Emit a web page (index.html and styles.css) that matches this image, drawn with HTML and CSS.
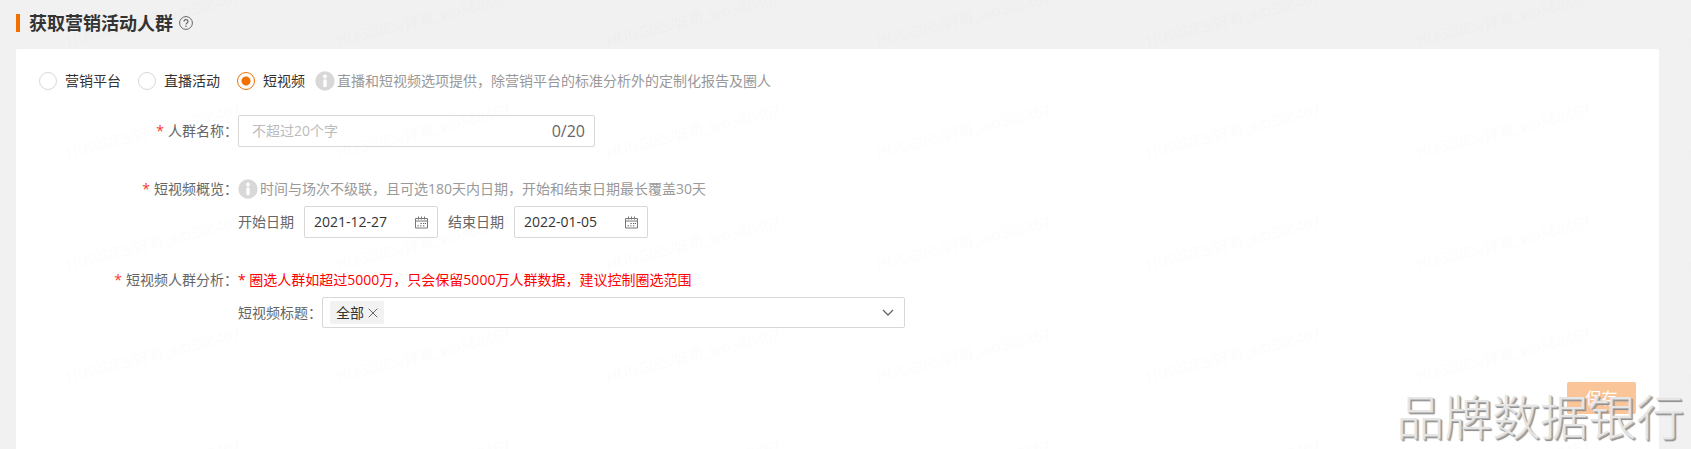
FILE: index.html
```html
<!DOCTYPE html>
<html lang="zh-CN">
<head>
    <meta charset="UTF-8">
    <meta name="viewport" content="width=device-width, initial-scale=1.0">
    <title>获取营销活动人群</title>
    <link rel="stylesheet" href="styles.css">
</head>
<body>

    <!-- Shared icons -->
    <svg class="icon-defs" aria-hidden="true">
        <symbol id="icon-info" viewBox="0 0 20 20">
            <circle cx="10" cy="10" r="9.7" fill="#d8d8d8"/>
            <circle cx="10" cy="5.5" r="1.9" fill="#fff"/>
            <rect x="8.3" y="8.2" width="3.4" height="8" rx="1.5" fill="#fff"/>
        </symbol>
        <symbol id="icon-calendar" viewBox="0 0 13 13">
            <path d="M.5 2.5h12v9.5H.5zM.5 5h12M3.5 .5v3M6.5 .5v3M9.5 .5v3" fill="none" stroke="#777"/>
            <path d="M5.5 7.5h1.3M8 7.5h1.3M10 7.5h1M2.5 9.8h1.3M5.2 9.8h1.3M8 9.8h1.3" stroke="#666"/>
        </symbol>
    </svg>

    <header class="page-header">
        <h1 class="page-title">获取营销活动人群</h1>
        <svg class="icon-help" viewBox="0 0 14 14">
            <circle cx="7" cy="7" r="6.4" fill="none" stroke="#666"/>
            <path d="M5 5.6c0-2.6 4-2.6 4 0 0 1.5-2 1.4-2 3" fill="none" stroke="#666" stroke-width="1.2"/>
            <circle cx="7" cy="10.3" r=".8" fill="#666"/>
        </svg>
    </header>

    <main class="panel">
        <form class="form">
            <div class="radio-row">
                <label class="radio"><input type="radio" name="source">营销平台</label>
                <label class="radio"><input type="radio" name="source">直播活动</label>
                <label class="radio"><input type="radio" name="source" checked>短视频</label>
                <p class="hint"><svg class="icon-info"><use href="#icon-info"/></svg>直播和短视频选项提供，除营销平台的标准分析外的定制化报告及圈人</p>
            </div>

            <div class="form-item">
                <label class="form-label" for="crowdName">人群名称：</label>
                <div class="input-box name-box">
                    <input type="text" id="crowdName" maxlength="20" placeholder="不超过20个字">
                    <span class="count">0/20</span>
                </div>
            </div>

            <div class="form-item">
                <span class="form-label label-top">短视频概览：</span>
                <div class="form-content">
                    <p class="hint"><svg class="icon-info"><use href="#icon-info"/></svg>时间与场次不级联，且可选180天内日期，开始和结束日期最长覆盖30天</p>
                    <div class="date-row">
                        <label for="startDate">开始日期</label>
                        <div class="input-box date-box">
                            <input type="text" id="startDate" value="2021-12-27">
                            <button type="button" class="icon-btn" aria-label="选择开始日期"><svg class="icon-calendar"><use href="#icon-calendar"/></svg></button>
                        </div>
                        <label for="endDate">结束日期</label>
                        <div class="input-box date-box">
                            <input type="text" id="endDate" value="2022-01-05">
                            <button type="button" class="icon-btn" aria-label="选择结束日期"><svg class="icon-calendar"><use href="#icon-calendar"/></svg></button>
                        </div>
                    </div>
                </div>
            </div>

            <div class="form-item">
                <span class="form-label label-top">短视频人群分析：</span>
                <div class="form-content">
                    <p class="warning">* 圈选人群如超过5000万，只会保留5000万人群数据，建议控制圈选范围</p>
                    <div class="title-row">
                        <label for="videoTitle">短视频标题：</label>
                        <div class="select-box">
                            <select id="videoTitle"><option value=""></option></select>
                            <span class="tag">全部
                                <button type="button" class="icon-btn" aria-label="移除">
                                    <svg class="icon-close" viewBox="0 0 10 10"><path d="M.7 .7l8.6 8.6M9.3 .7L.7 9.3" stroke="#666"/></svg>
                                </button>
                            </span>
                            <svg class="icon-arrow" viewBox="0 0 12 7"><path d="M1 1l5 5 5-5" fill="none" stroke="#666" stroke-width="1.3"/></svg>
                        </div>
                    </div>
                </div>
            </div>

            <div class="form-footer">
                <button type="submit" class="save-btn" disabled>保存</button>
            </div>
        </form>
    </main>

    <!-- User watermark -->
    <svg class="watermark" aria-hidden="true">
        <defs>
            <pattern id="mark" y="-20" width="270" height="112" patternUnits="userSpaceOnUse">
                <text class="watermark-text" transform="translate(68 66) rotate(-14)">HUGGIES/好奇_wb588467</text>
            </pattern>
        </defs>
        <rect width="100%" height="100%" fill="url(#mark)"/>
    </svg>
    <div class="brand">品牌数据银行</div>

</body>
</html>
```
FILE: styles.css
```css
* {
    margin: 0;
    padding: 0;
    box-sizing: border-box;
}

body {
    position: relative;
    display: flex;
    flex-direction: column;
    min-height: 100vh;
    overflow-x: hidden;
    background: #f1f1f1;
    color: #666;
    font: 14px/20px "Open Sans", "Noto Sans CJK SC", sans-serif;
}

input,
select,
button {
    font: inherit;
    border: none;
    outline: none;
    background: none;
}

svg {
    display: block;
    flex: none;
}

.icon-defs {
    position: absolute;
    width: 0;
    height: 0;
}

/* Header */
.page-header {
    display: flex;
    align-items: center;
    gap: 6px;
    height: 45px;
    padding-left: 16px;
}

.page-title {
    border-left: 4px solid #f27000;
    padding-left: 9px;
    color: #333;
    font-size: 18px;
    line-height: 18px;
}

.icon-help {
    width: 14px;
    height: 14px;
}

/* Panel */
.panel {
    flex: 1;
    margin: 4px 32px 0 16px;
    padding: 22px 23px 24px;
    border-radius: 2px 2px 0 0;
    background: #fff;
}

.radio-row {
    display: flex;
    align-items: center;
    margin-bottom: 24px;
}

.radio {
    display: flex;
    align-items: center;
    gap: 8px;
    margin-right: 17px;
    color: #333;
}

.radio:nth-of-type(3) {
    margin-right: 10px;
}

.radio input {
    appearance: none;
    width: 18px;
    height: 18px;
    border: 1px solid #d8d8d8;
    border-radius: 50%;
    background: #fff;
}

.radio input:checked {
    border-color: #f27000;
    background: radial-gradient(circle, #f27000 4px, #fff 5px);
}

.hint {
    display: flex;
    align-items: center;
    gap: 2px;
    color: #999;
}

.icon-info {
    width: 20px;
    height: 20px;
}

/* Form rows */
.form-item {
    display: flex;
    margin-bottom: 32px;
}

.form-label {
    flex: none;
    width: 199px;
    text-align: right;
    line-height: 32px;
}

.label-top {
    line-height: 20px;
}

.form-label::before {
    content: "*";
    margin-right: 4px;
    color: #f33;
}

.input-box {
    display: flex;
    align-items: center;
    height: 32px;
    padding: 0 9px;
    border: 1px solid #d8d8d8;
    border-radius: 2px;
    background: #fff;
}

.input-box input {
    flex: 1;
    min-width: 0;
    color: #333;
}

.name-box {
    width: 357px;
    padding-left: 13px;
}

.name-box input::placeholder {
    color: #bbb;
}

.count {
    font-size: 16px;
}

.date-row {
    display: flex;
    align-items: center;
    gap: 10px;
    margin-top: 7px;
}

.date-box {
    width: 134px;
}

.icon-btn {
    display: flex;
    cursor: pointer;
}

.icon-calendar {
    width: 13px;
    height: 13px;
}

.warning {
    color: #f00;
}

.title-row {
    display: flex;
    align-items: center;
    margin-top: 7px;
}

.select-box {
    position: relative;
    width: 583px;
}

.select-box select {
    display: block;
    appearance: none;
    width: 100%;
    height: 31px;
    border: 1px solid #d8d8d8;
    border-radius: 2px;
    background: #fff;
}

.tag {
    position: absolute;
    top: 4px;
    left: 8px;
    display: flex;
    align-items: center;
    gap: 4px;
    height: 23px;
    padding: 0 6px;
    border-radius: 2px;
    background: #f2f2f2;
    color: #333;
}

.icon-close {
    width: 10px;
    height: 10px;
}

.icon-arrow {
    position: absolute;
    top: 12px;
    right: 11px;
    width: 12px;
    height: 7px;
    pointer-events: none;
}

.form-footer {
    display: flex;
    justify-content: flex-end;
    margin-top: 54px;
}

.save-btn {
    width: 69px;
    height: 32px;
    border-radius: 2px;
    background: #f9c599;
    color: #fff;
    font-size: 16px;
}

/* Watermarks */
.watermark {
    position: absolute;
    top: 0;
    left: 0;
    width: 100%;
    height: 100%;
    pointer-events: none;
}

.watermark-text {
    fill: rgba(0, 0, 0, 0.01);
    font-size: 15px;
}

.brand {
    position: absolute;
    right: 7px;
    bottom: 4px;
    color: #e6e6e6;
    font-size: 48px;
    font-weight: 300;
    line-height: 56px;
    text-shadow: 1px 1px 0 #b0b0b0, 2px 2px 1px #888;
    pointer-events: none;
}
```
